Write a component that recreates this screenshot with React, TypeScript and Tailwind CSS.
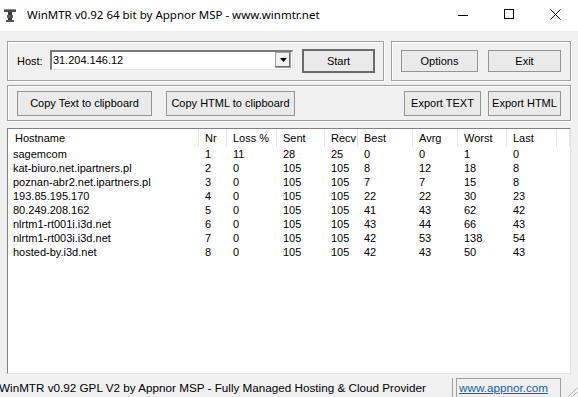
import React from 'react';

const ROWS = [
  ['sagemcom', '1', '11', '28', '25', '0', '0', '1', '0'],
  ['kat-biuro.net.ipartners.pl', '2', '0', '105', '105', '8', '12', '18', '8'],
  ['poznan-abr2.net.ipartners.pl', '3', '0', '105', '105', '7', '7', '15', '8'],
  ['193.85.195.170', '4', '0', '105', '105', '22', '22', '30', '23'],
  ['80.249.208.162', '5', '0', '105', '105', '41', '43', '62', '42'],
  ['nlrtm1-rt001i.i3d.net', '6', '0', '105', '105', '43', '44', '66', '43'],
  ['nlrtm1-rt003i.i3d.net', '7', '0', '105', '105', '42', '53', '138', '54'],
  ['hosted-by.i3d.net', '8', '0', '105', '105', '42', '43', '50', '43'],
];

const HEADERS = ['Hostname', 'Nr', 'Loss %', 'Sent', 'Recv', 'Best', 'Avrg', 'Worst', 'Last', ''];

const COLS = 'grid grid-cols-[190px_28px_50px_48px_33px_55px_45px_49px_50px_1fr]';

const Button = ({ label, w, h, isDefault }: { label: string; w: string; h: string; isDefault?: boolean }) => (
  <div
    className={`${w} ${h} flex items-center justify-center bg-[#eaeaea] text-black ${
      isDefault ? 'border-2 border-[#6b6b6b]' : 'border border-[#959595]'
    }`}
  >
    {label}
  </div>
);

const Group = ({ className, children }: { className: string; children: React.ReactNode }) => (
  <div className={`border border-[#a0a0a0] shadow-[inset_1px_1px_0_#ffffff,1px_1px_0_#ffffff] flex items-center ${className}`}>
    {children}
  </div>
);

export default function App() {
  return (
    <div className="w-[578px] h-[397px] overflow-hidden bg-[#f0f0f0] flex flex-col font-['Liberation_Sans',Arial,sans-serif] text-[11px] text-black">
      {/* Title bar */}
      <div className="h-[31px] shrink-0 bg-white flex items-center">
        <svg width="14" height="14" viewBox="0 0 14 14" className="ml-[3px] mt-[-2px]">
          <rect x="1" y="1" width="12" height="3" fill="#4a4a4a" />
          <rect x="1" y="1" width="12" height="1" fill="#8a8a8a" />
          <rect x="5" y="4" width="4" height="9" fill="#3a3a3a" />
          <rect x="4" y="7" width="6" height="3" fill="#5a5a5a" />
          <rect x="3" y="12" width="8" height="2" fill="#555555" />
        </svg>
        <span className="ml-[10px] font-['Noto_Sans',sans-serif] text-[11.5px] mt-[-2px]">
          WinMTR v0.92 64 bit by Appnor MSP - www.winmtr.net
        </span>
        <div className="ml-auto flex items-center h-full">
          <div className="w-[46px] h-full flex items-center justify-center">
            <div className="w-[10px] h-px bg-black" />
          </div>
          <div className="w-[46px] h-full flex items-center justify-center">
            <div className="w-[10px] h-[10px] border border-black mt-[-3px]" />
          </div>
          <div className="w-[46px] h-full flex items-center justify-center">
            <svg width="11" height="11" viewBox="0 0 11 11" className="mt-[-3px]">
              <path d="M0.5 0.5 L10.5 10.5 M10.5 0.5 L0.5 10.5" stroke="#000" strokeWidth="1" />
            </svg>
          </div>
        </div>
      </div>

      <div className="flex flex-col px-[7px] pt-[10px] flex-1 min-h-0">
        {/* Row 1 */}
        <div className="flex gap-[7px] h-[40px] shrink-0">
          <Group className="w-[377px] pl-[9px] pr-[8px]">
            <span className="w-[33px]">Host:</span>
            <div className="w-[244px] h-[20px] mt-[-3px] bg-white border-t-2 border-l-2 border-[#7a7a7a] border-b border-r border-b-[#e3e3e3] border-r-[#e3e3e3] flex items-center">
              <span className="pl-[1px] flex-1">31.204.146.12</span>
              <div className="w-[16px] h-[16px] mr-[1px] bg-[#f0f0f0] border border-[#a0a0a0] shadow-[inset_-1px_-1px_0_#696969] flex items-center justify-center">
                <svg width="7" height="4" viewBox="0 0 7 4">
                  <path d="M0 0 H7 L3.5 4 Z" fill="#000" />
                </svg>
              </div>
            </div>
            <div className="ml-[9px]">
              <Button label="Start" w="w-[73px]" h="h-[24px]" isDefault />
            </div>
          </Group>
          <Group className="flex-1 pl-[9px] pr-[9px] justify-between">
            <Button label="Options" w="w-[77px]" h="h-[22px]" />
            <Button label="Exit" w="w-[73px]" h="h-[22px]" />
          </Group>
        </div>

        {/* Row 2 */}
        <Group className="mt-[4px] h-[36px] shrink-0 pl-[9px] pr-[9px]">
          <Button label="Copy Text to clipboard" w="w-[135px]" h="h-[25px]" />
          <div className="ml-[14px]">
            <Button label="Copy HTML to clipboard" w="w-[129px]" h="h-[25px]" />
          </div>
          <div className="ml-auto flex gap-[7px]">
            <Button label="Export TEXT" w="w-[77px]" h="h-[25px]" />
            <Button label="Export HTML" w="w-[73px]" h="h-[25px]" />
          </div>
        </Group>

        {/* List */}
        <div className="mt-[7px] h-[246px] shrink-0 bg-white border-t border-l border-[#828282] border-b border-r border-b-[#e3e3e3] border-r-[#e3e3e3] pl-[1px] overflow-hidden">
          <div className={`${COLS} h-[18px]`}>
            {HEADERS.map((h, i) => (
              <div key={i} className="border-r border-[#e5e5e5] pl-[6px] flex items-center">
                {h}
              </div>
            ))}
          </div>
          {ROWS.map((r, i) => (
            <div key={i} className={`${COLS} h-[14px] leading-[14px]`}>
              {r.map((c, j) => (
                <div key={j} className={j === 0 ? 'pl-[4px]' : 'pl-[6px]'}>
                  {c}
                </div>
              ))}
              <div />
            </div>
          ))}
        </div>
      </div>

      {/* Status bar */}
      <div className="h-[19px] shrink-0 flex items-stretch font-['Liberation_Sans',Arial,sans-serif] text-[11.7px]">
        <div className="w-[454px] border-r border-[#a0a0a0] flex items-center pl-0 ml-[-1px]">
          WinMTR v0.92 GPL V2 by Appnor MSP - Fully Managed Hosting &amp; Cloud Provider
        </div>
        <div className="ml-[3px] w-[105px] border-l border-r border-t border-[#a0a0a0] flex items-center pl-[2px]">
          <span className="text-[#0066cc] underline">www.appnor.com</span>
        </div>
        <div className="flex-1 flex items-end justify-end">
          <svg width="12" height="12" viewBox="0 0 12 12">
            <path d="M11 3 L3 11 M11 7 L7 11 M11 11 L11 11" stroke="#b0b0b0" strokeWidth="1" />
          </svg>
        </div>
      </div>
    </div>
  );
}
